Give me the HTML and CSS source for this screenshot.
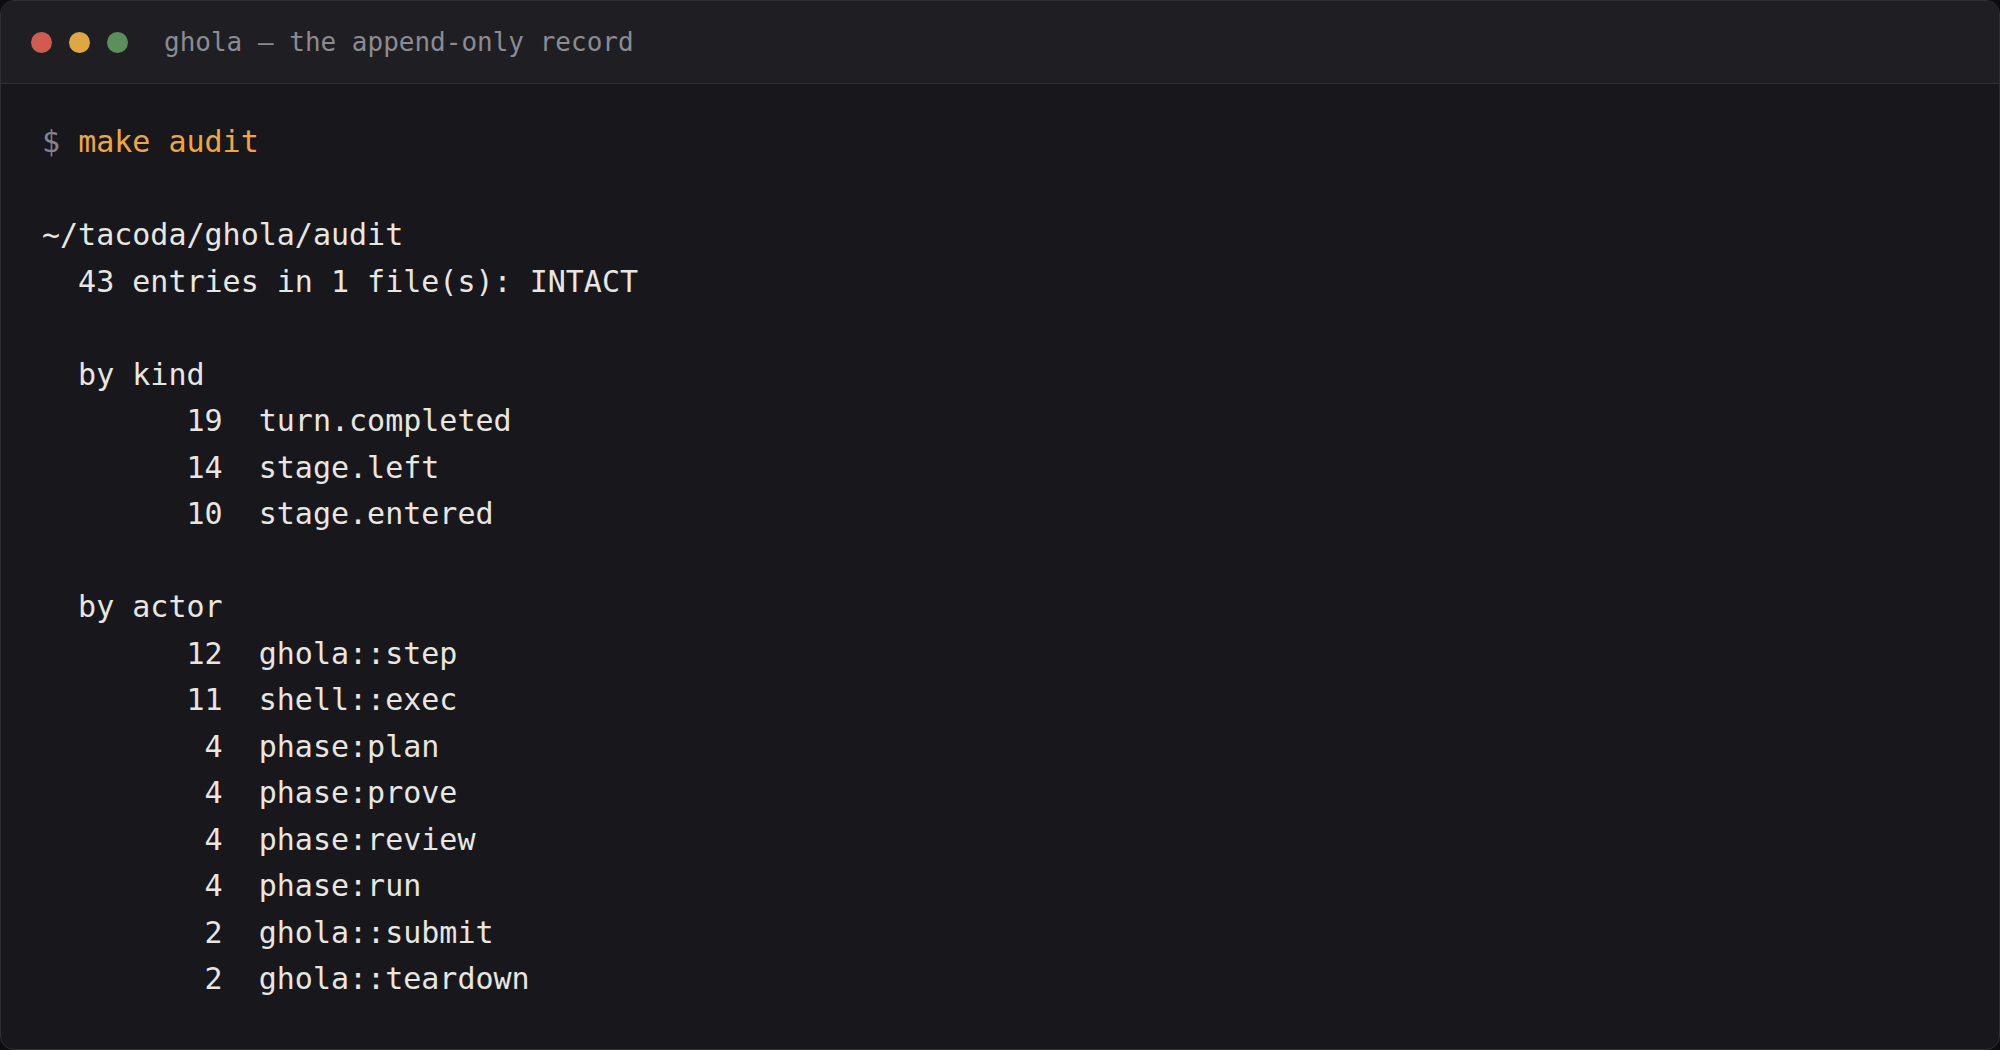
FILE: index.html
```html
<!DOCTYPE html>
<html>
<head>
<meta charset="utf-8">
<title>ghola</title>
<link rel="stylesheet" href="styles.css">
</head>
<body>
<div class="window">
  <div class="titlebar">
    <span class="dot red"></span>
    <span class="dot yellow"></span>
    <span class="dot green"></span>
    <span class="title">ghola — the append-only record</span>
  </div>
  <div class="term">
<div class="line"><span class="prompt">$</span> <span class="cmd">make audit</span></div>
<div class="line"> </div>
<div class="line">~/tacoda/ghola/audit</div>
<div class="line">  43 entries in 1 file(s): INTACT</div>
<div class="line"> </div>
<div class="line">  by kind</div>
<div class="line">        19  turn.completed</div>
<div class="line">        14  stage.left</div>
<div class="line">        10  stage.entered</div>
<div class="line"> </div>
<div class="line">  by actor</div>
<div class="line">        12  ghola::step</div>
<div class="line">        11  shell::exec</div>
<div class="line">         4  phase:plan</div>
<div class="line">         4  phase:prove</div>
<div class="line">         4  phase:review</div>
<div class="line">         4  phase:run</div>
<div class="line">         2  ghola::submit</div>
<div class="line">         2  ghola::teardown</div>
  </div>
</div>
</body>
</html>
```

FILE: styles.css
```css
html, body {
  margin: 0;
  padding: 0;
  background: #0d0d0f;
}
body {
  width: 2000px;
  height: 1050px;
  overflow: hidden;
}
.window {
  box-sizing: border-box;
  width: 2000px;
  height: 1050px;
  background: #18181c;
  border: 1px solid #2e2e33;
  border-radius: 14px;
  overflow: hidden;
  display: flex;
  flex-direction: column;
}
.titlebar {
  box-sizing: border-box;
  height: 83px;
  flex: 0 0 83px;
  background: #1f1f23;
  border-bottom: 1px solid #2e2e33;
  display: flex;
  align-items: center;
  padding-left: 30px;
  gap: 17px;
}
.dot {
  width: 21px;
  height: 21px;
  border-radius: 50%;
  flex: 0 0 21px;
}
.red { background: #cf5b51; }
.yellow { background: #dea742; }
.green { background: #5b8f5c; }
.title {
  margin-left: 19px;
  font-family: "DejaVu Sans Mono", monospace;
  font-size: 26px;
  color: #8b8b91;
  white-space: pre;
}
.term {
  padding: 35px 0 0 41px;
  font-family: "DejaVu Sans Mono", monospace;
  font-size: 30px;
  line-height: 46.5px;
  color: #e8e6e1;
}
.line {
  white-space: pre;
  height: 46.5px;
}
.prompt { color: #838389; }
.cmd { color: #f0a63a; }
```
